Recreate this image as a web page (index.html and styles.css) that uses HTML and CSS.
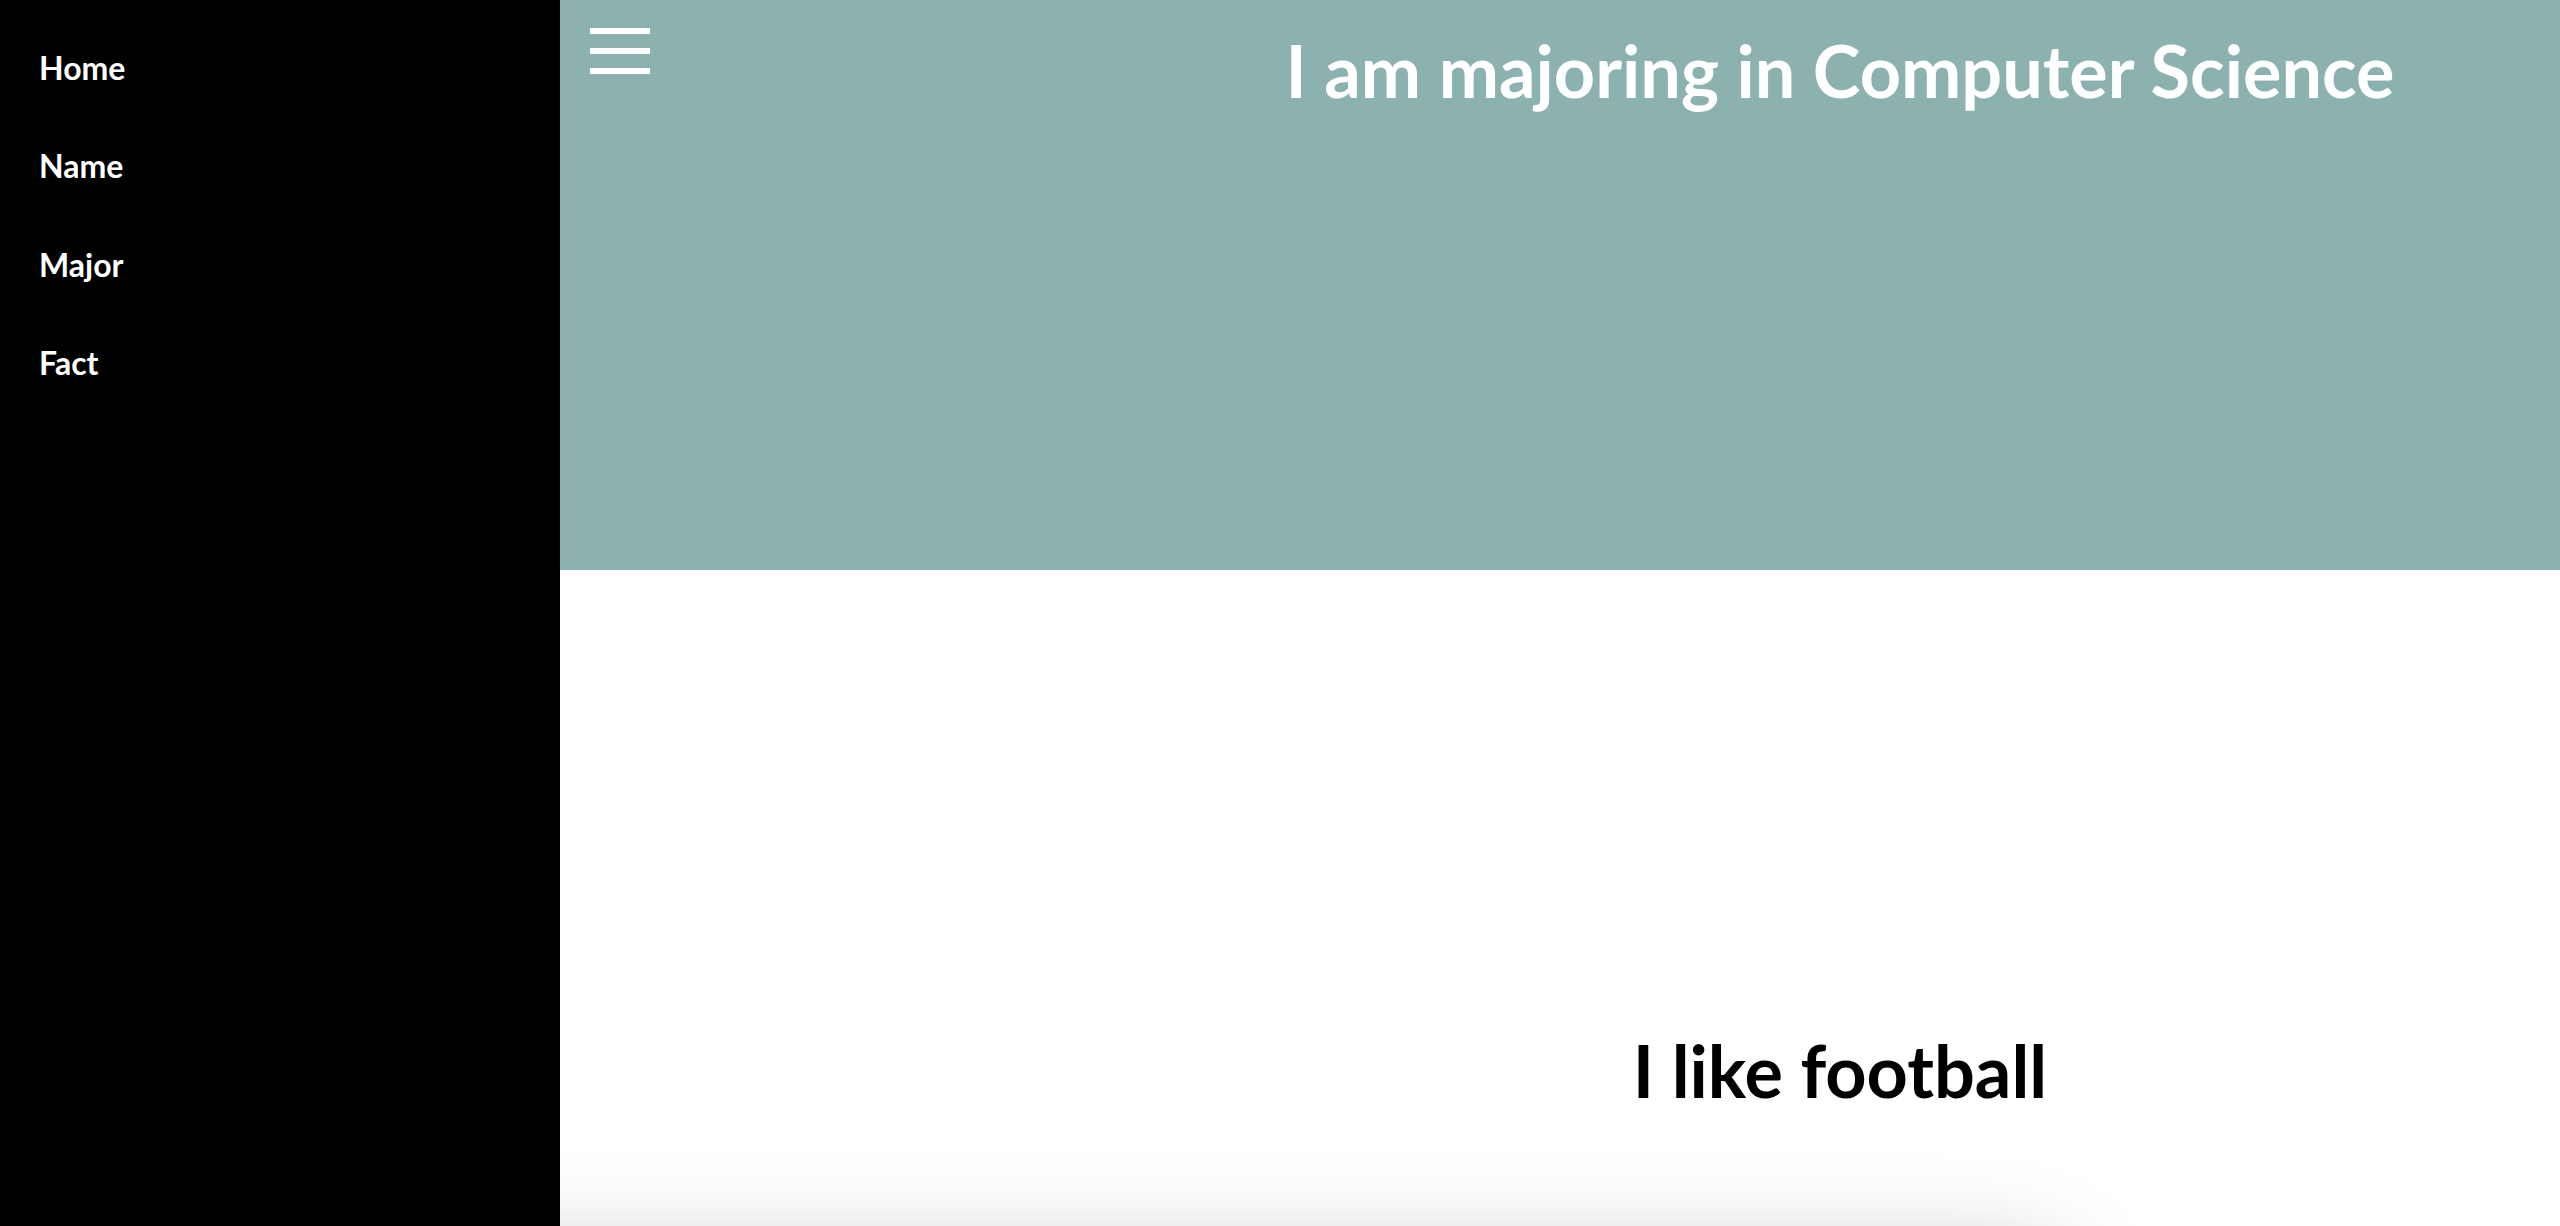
FILE: index.html
```html
<!DOCTYPE html>
<html lang="en">
<head>
<meta charset="utf-8">
<title>About me</title>
<link rel="stylesheet" href="styles.css">
</head>
<body>
<div class="page">
  <nav class="sidenav">
    <a href="#" class="nav-link">Home</a>
    <a href="#" class="nav-link">Name</a>
    <a href="#" class="nav-link">Major</a>
    <a href="#" class="nav-link">Fact</a>
  </nav>
  <main class="main">
    <header class="hero">
      <button class="menu-btn" aria-label="Menu">
        <span class="bar"></span>
        <span class="bar"></span>
        <span class="bar"></span>
      </button>
      <h1 class="hero-title">I am majoring in Computer Science</h1>
    </header>
    <section class="fact">
      <h2 class="fact-title">I like football</h2>
    </section>
    <div class="card"></div>
  </main>
</div>
</body>
</html>
```
FILE: styles.css
```css
html, body {
  margin: 0;
  padding: 0;
  height: 100%;
  overflow: hidden;
  background: #ffffff;
  font-family: Lato, "Open Sans", sans-serif;
}

.page {
  display: flex;
  width: 3120px;
  height: 1226px;
  overflow: hidden;
}

.sidenav {
  position: relative;
  z-index: 2;
  flex: 0 0 560px;
  height: 1226px;
  background: #000000;
  padding-top: 19px;
  box-sizing: border-box;
  display: flex;
  flex-direction: column;
}

.nav-link {
  display: block;
  flex-shrink: 0;
  padding: 30px 39px;
  color: #ffffff;
  text-decoration: none;
  font-size: 32px;
  font-weight: 700;
  line-height: 1.2;
}

.main {
  flex: 0 0 2560px;
  width: 2560px;
  display: flex;
  flex-direction: column;
}

.hero {
  flex-shrink: 0;
  height: 570px;
  background: #8bb2ae;
  display: grid;
  grid-template-columns: 1fr auto 1fr;
  align-items: start;
}

.menu-btn {
  justify-self: start;
  margin: 28px 0 0 30px;
  padding: 0;
  border: 0;
  background: transparent;
  display: flex;
  flex-direction: column;
  gap: 14px;
  cursor: pointer;
}

.bar {
  display: block;
  width: 60px;
  height: 6px;
  background: #ffffff;
}

.hero-title {
  grid-column: 2;
  margin: 27px 0 0;
  color: #ffffff;
  font-size: 72px;
  font-weight: 700;
  line-height: 1.2;
  text-align: center;
  white-space: nowrap;
}

.fact {
  flex-shrink: 0;
  padding-top: 457px;
  text-align: center;
}

.fact-title {
  margin: 0;
  color: #000000;
  font-size: 72px;
  font-weight: 700;
  line-height: 1.2;
}

.card {
  flex-shrink: 0;
  margin-top: 147px;
  margin-left: -600px;
  width: 2100px;
  height: 400px;
  border-radius: 40px;
  background: #ffffff;
  box-shadow: 0 0 100px rgba(0, 0, 0, 0.28);
}
```
